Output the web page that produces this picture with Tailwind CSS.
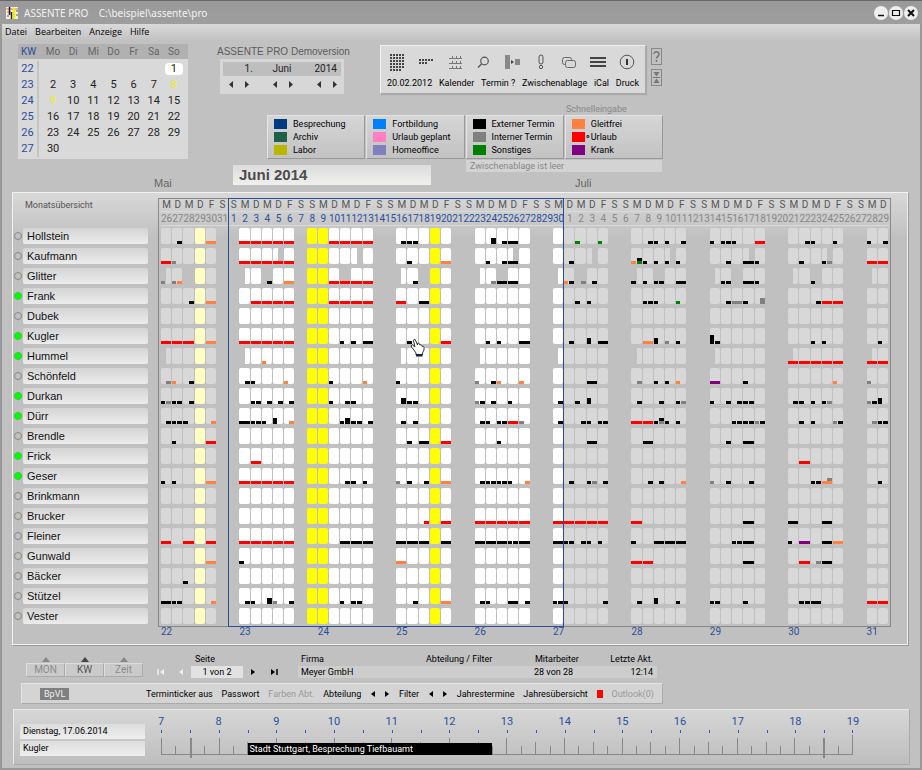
<!DOCTYPE html>
<html lang="de">
<head>
<meta charset="utf-8">
<title>ASSENTE PRO</title>
<script src="https://cdn.jsdelivr.net/npm/@tailwindcss/browser@4"></script>
</head>
<body class="min-h-screen bg-[#c1c1c1] font-[Roboto,'Liberation_Sans',Arial,sans-serif] text-[9px] leading-3 text-black">
<div class="flex min-h-screen flex-col border-x-2 border-b-2 border-[#999] bg-[#c1c1c1]">

  <!-- title bar -->
  <header class="-mx-0.5 flex h-6 items-center border-t border-[#666] bg-linear-to-b from-[#999] to-[#9e9e9e] pr-1 pl-1.5 text-[#f2f2f2]">
    <svg class="h-3 w-3" viewBox="0 0 12 12"><rect width="12" height="12" fill="#f4f0e0"/><path d="M0 2h12M1 5h4" stroke="#d66" stroke-width="1"/><path d="M3.500 0v8M5.500 5v7" stroke="#222" stroke-width="1.500"/><path d="M8 1v11" stroke="#ee0" stroke-width="2.500"/><path d="M1 9h2M10 8h2M10 4h2" stroke="#555"/></svg>
    <h1 class="ml-1.5 font-['Noto_Sans','Open_Sans',sans-serif] text-[10px] whitespace-pre">ASSENTE PRO    C:\beispiel\assente\pro</h1>
    <div class="ml-auto flex gap-px">
      <button aria-label="Minimieren" class="size-3.5 rounded-full bg-[#eee]"><svg viewBox="0 0 14 14"><path d="M4 9.500h6" stroke="#111" stroke-width="1.500"/></svg></button>
      <button aria-label="Maximieren" class="size-3.5 rounded-full bg-[#eee]"><svg viewBox="0 0 14 14"><path d="M3.500 4.500h7v5h-7z" fill="none" stroke="#111" stroke-width="1.200"/></svg></button>
      <button aria-label="Schließen" class="size-3.5 rounded-full bg-[#eee]"><svg viewBox="0 0 14 14"><path d="M4 4l6 6M10 4l-6 6" stroke="#111" stroke-width="2"/></svg></button>
    </div>
  </header>
  <nav class="flex h-4 items-center gap-2 bg-linear-to-b from-[#dadada] to-[#c2c2c2] pl-[3px] font-['Open_Sans',sans-serif] font-medium">
    <button>Datei</button><button>Bearbeiten</button><button>Anzeige</button><button>Hilfe</button>
  </nav>

  <!-- month picker, toolbar, legend -->
  <section class="flex pt-1 pl-4">
    <table class="block h-[115px] w-[170px] shrink-0 text-center text-[11px] text-[#222]">
      <thead class="block text-[10px] text-[#666]"><tr class="grid h-[15px] grid-cols-[25px_repeat(7,minmax(0,1fr))] items-center bg-[#b1b1b1] pr-1"><th class="mr-1 font-normal text-[#2a4c9c]">KW</th><th class="font-normal">Mo</th><th class="font-normal">Di</th><th class="font-normal">Mi</th><th class="font-normal">Do</th><th class="font-normal">Fr</th><th class="font-normal">Sa</th><th class="font-normal">So</th></tr></thead>
      <tbody id="mini" class="block bg-[#d9d9d9] py-0.5"></tbody>
    </table>
    <div class="flex flex-col">
      <div class="flex h-[60px] items-start">
        <div class="ml-[29px] w-[163px] shrink-0">
          <h2 class="font-['Liberation_Sans',sans-serif] text-[10px] leading-[15px] whitespace-nowrap text-[#5c5c5c]">ASSENTE PRO Demoversion</h2>
          <div class="ml-[3px] flex h-[35px] w-[124px] flex-col gap-1 bg-[#d7d7d7] p-[3px]">
            <div class="grid h-3.5 grid-cols-3 items-center bg-[#bebebe] text-center text-[10px] text-[#222]"><span class="pl-3">1.</span><span>Juni</span><span class="pr-1 text-right">2014</span></div>
            <div id="steppers" class="flex justify-between pr-0.5 pl-1"></div>
          </div>
        </div>
        <div class="mt-px flex h-[49px] w-[266px] shrink-0 flex-col justify-between border border-[#f0f0f0] border-r-[#aaa] border-b-[#aaa] bg-[#d9d9d9] pt-1.5 pb-1 shadow-[1px_1px_1px_#aaa]">
          <div id="tools" class="grid grid-cols-9 pr-1 pl-0.5"></div>
          <div id="toolLabels" class="flex justify-between px-1.5"></div>
        </div>
        <div class="mt-1 ml-[5px] flex shrink-0 flex-col gap-1">
          <button aria-label="Hilfe" class="h-[17px] w-[11px] border border-[#888]"><svg viewBox="0 0 9 15"><path d="M2 5a2.500 2.500 0 1 1 4 2.200Q4.500 8 4.500 9.500M4.500 11v2" fill="none" stroke="#777" stroke-width="1.600"/></svg></button>
          <button aria-label="Einklappen" class="h-[17px] w-[11px] border border-[#888]"><svg viewBox="0 0 9 15"><path d="M1 7.500h7" stroke="#777"/><path d="M1.500 2h6L4.500 6.500zM1.500 13h6L4.500 8.500z" fill="#777"/></svg></button>
        </div>
      </div>
      <div class="ml-[79px] w-[396px]">
        <p class="h-[11px] pl-[299px] leading-[10px] whitespace-nowrap text-[#888]">Schnelleingabe</p>
        <div id="legend" class="grid grid-cols-4 gap-px"></div>
      </div>
    </div>
  </section>
  <div class="flex h-[33px] items-start text-[#666]">
    <span class="mt-[18px] ml-[152px] w-[79px] font-['Liberation_Sans',sans-serif] text-[11px]">Mai</span>
    <h2 class="mt-1.5 h-5 w-[198px] bg-linear-to-b from-[#dcdcdc] to-[#f0f0ee] pl-1.5 font-['Liberation_Sans',sans-serif] text-[15px] leading-5 font-bold text-[#4c4c4c]">Juni 2014</h2>
    <div class="ml-[35px] w-[196px]">
      <p class="mt-px h-3 bg-[#d3d3d3] pl-1 text-[#888]">Zwischenablage ist leer</p>
      <span class="mt-[5px] block pl-[109px] font-['Liberation_Sans',sans-serif] text-[11px]">Juli</span>
    </div>
  </div>

  <!-- monthly overview -->
  <main class="mr-3 ml-2.5 border border-[#f2f2f2] bg-linear-to-b from-[#d8d8d8] via-[#c0c0c0] via-10% to-[#c0c0c0] pt-[5px] pr-[18px] pb-1.5 shadow-[1px_1px_0_#999]">
    <div class="relative">
      <table class="block">
        <thead id="head" class="block"></thead>
        <tbody id="rows" class="block"></tbody>
        <tfoot id="foot" class="block"></tfoot>
      </table>
      <div class="pointer-events-none absolute top-0 right-[-2px] bottom-[11px] left-[145px] border border-[#888]"></div>
      <div class="pointer-events-none absolute top-0 right-0 bottom-[11px] left-[148px] grid grid-cols-[repeat(65,minmax(0,1fr))]"><div class="col-span-30 col-start-7 border border-[#2a4f94]"></div></div>
      <svg class="pointer-events-none absolute top-[140px] left-[397px] h-5 w-4" viewBox="0 0 16 20"><path d="M4 12L1.500 9q-1-2 1-2L5 9 3.500 3q0-2 1.700-1.500L7.500 7V5.500q1.500-1 2 .5l.3 1q1.500-1 2 .6l.2.8q1.700-.7 2 1V12l-1.500 3v2H6v-2z" fill="#fff" stroke="#333" stroke-width="1"/><path d="M6 16h6.500v2.500H6z" fill="#124"/></svg>
    </div>
  </main>

  <!-- view switch, pager, totals -->
  <section class="mt-2 flex items-start">
    <div class="ml-6 grid w-[117px] grid-cols-3 text-center text-[10px] text-[#8a8a8a]">
      <button class="flex flex-col items-center"><svg class="mt-1 mb-px h-[5px] w-2" viewBox="0 0 8 5"><path d="M4 0L8 5H0z" fill="#888"/></svg><span class="w-full border border-[#ddd] border-r-[#aaa] border-b-[#aaa] bg-[#cacaca]">MON</span></button>
      <button class="flex flex-col items-center text-[#555]"><svg class="mt-1 mb-px h-[5px] w-2" viewBox="0 0 8 5"><path d="M4 0L8 5H0z" fill="#444"/></svg><span class="w-full border border-[#ddd] border-r-[#aaa] border-b-[#aaa] bg-[#cacaca]">KW</span></button>
      <button class="flex flex-col items-center"><svg class="mt-1 mb-px h-[5px] w-2" viewBox="0 0 8 5"><path d="M4 0L8 5H0z" fill="#888"/></svg><span class="w-full border border-[#ddd] border-r-[#aaa] border-b-[#aaa] bg-[#cacaca]">Zeit</span></button>
    </div>
    <div class="ml-3.5 flex w-[122px] items-end">
      <button aria-label="Erste Seite" class="w-4"><svg class="mb-0.5 h-2 w-2" viewBox="0 0 8 8"><path d="M1 1v6" stroke="#eee" stroke-width="1.500"/><path d="M7 1v6L3 4z" fill="#eee"/></svg></button>
      <button aria-label="Vorige Seite" class="w-[18px]"><svg class="mb-0.5 ml-1 h-2 w-2" viewBox="0 0 8 8"><path d="M6 1v6L2 4z" fill="#eee"/></svg></button>
      <div class="w-[52px]"><p class="pl-1 leading-[13px]">Seite</p><p class="bg-[#e2e2e2] text-center">1 von 2</p></div>
      <button aria-label="Nächste Seite" class="ml-1.5 w-[21px]"><svg class="mb-0.5 h-2 w-2" viewBox="0 0 8 8"><path d="M2 1v6L6 4z"/></svg></button>
      <button aria-label="Letzte Seite"><svg class="mb-0.5 h-2 w-2" viewBox="0 0 8 8"><path d="M7 1v6" stroke="#000" stroke-width="1.500"/><path d="M1 1v6L5 4z"/></svg></button>
    </div>
    <dl class="ml-[19px] grid w-[359px] grid-cols-[125px_100px_84px_50px]">
      <div><dt class="pl-[3px] leading-[13px]">Firma</dt><dd class="h-3 bg-[#cdcdcd] pl-[3px]">Meyer GmbH</dd></div>
      <div><dt class="pl-[3px] leading-[13px]">Abteilung / Filter</dt><dd class="h-3 bg-[#cdcdcd]"></dd></div>
      <div><dt class="pl-3 leading-[13px]">Mitarbeiter</dt><dd class="h-3 bg-[#cdcdcd] pl-[11px]">28 von 28</dd></div>
      <div><dt class="pr-1 text-right leading-[13px] whitespace-nowrap">Letzte Akt.</dt><dd class="h-3 bg-[#cdcdcd] pr-1 text-right">12:14</dd></div>
    </dl>
  </section>
  <section class="mt-[5px] ml-[19px] flex h-[21px] w-[642px] items-center justify-between border border-[#e4e4e4] border-r-[#aaa] border-b-[#aaa] bg-[#d4d4d4] pr-2 pl-[18px]">
    <button class="mr-[68px] bg-[#808080] px-1 text-[#eee]">BpVL</button>
    <button>Terminticker aus</button><button>Passwort</button><button disabled class="text-[#999]">Farben Abt.</button>
    <button>Abteilung</button>
    <span class="flex gap-2"><button aria-label="Abteilung zurück"><svg class="size-1.5" viewBox="0 0 6 6"><path d="M5 0v6L1 3z"/></svg></button><button aria-label="Abteilung vor"><svg class="size-1.5" viewBox="0 0 6 6"><path d="M1 0v6l4-3z"/></svg></button></span>
    <button>Filter</button>
    <span class="flex gap-2"><button aria-label="Filter zurück"><svg class="size-1.5" viewBox="0 0 6 6"><path d="M5 0v6L1 3z"/></svg></button><button aria-label="Filter vor"><svg class="size-1.5" viewBox="0 0 6 6"><path d="M1 0v6l4-3z"/></svg></button></span>
    <button>Jahrestermine</button><button>Jahresübersicht</button>
    <i class="h-2 w-1.5 bg-[#f00]"></i>
    <button disabled class="text-[#999]">Outlook(0)</button>
  </section>

  <!-- day timeline -->
  <section class="mt-[5px] mr-2.5 ml-[11px] flex h-14 border border-[#e8e8e8] border-r-[#aaa] border-b-[#aaa] bg-linear-to-b from-[#d6d6d6] to-[#bebebe]">
    <div class="mt-3.5 ml-1.5 flex w-[125px] flex-col gap-0.5">
      <p class="h-[15px] bg-linear-to-b from-[#ddd] to-[#eee] pl-[3px] leading-[15px]">Dienstag, 17.06.2014</p>
      <p class="h-[15px] bg-linear-to-b from-[#ddd] to-[#eee] pl-[3px] leading-[15px]">Kugler</p>
    </div>
    <div class="relative mt-1.5 mr-14 ml-4 flex-1">
      <div id="hours" class="grid grid-cols-12 text-[11px] text-[#2a4f9c]"></div>
      <div id="halves" class="mt-0.5 grid h-[3px] grid-cols-24"></div>
      <div id="ticks" class="mt-0.5 grid h-5 grid-cols-48 items-end border-r border-b border-[#888]"></div>
      <div class="absolute top-[27px] right-[52.1%] left-[12.5%] h-3 bg-black pl-0.5 leading-3 whitespace-nowrap text-white">Stadt Stuttgart, Besprechung Tiefbauamt</div>
    </div>
  </section>
</div>

<script>
const byId = id => document.getElementById(id);

// small month calendar
const weekCell = (kw, days) => `<tr class="grid h-4 grid-cols-[25px_repeat(7,minmax(0,1fr))] items-center pr-1"><th class="mr-1 h-full border-r-2 border-[#c4c4c4] leading-4 font-normal text-[#2a4c9c]">${kw}</th>${days}</tr>`;
byId('mini').innerHTML = [22, 23, 24, 25, 26, 27].map((kw, w) => weekCell(kw, [...Array(7)].map((_, i) => {
  const d = w * 7 + i - 5;
  if (d < 1 || d > 30) return '<td></td>';
  const c = d === 1 ? 'mx-px rounded-sm bg-white' : d === 8 || d === 9 ? 'text-[#eeee20]' : '';
  return `<td class="${c}">${d}</td>`;
}).join(''))).join('');

byId('steppers').innerHTML = ['Tag', 'Monat', 'Jahr'].map(n => `<span class="flex justify-center gap-2"><button aria-label="${n} zurück"><svg class="size-2" viewBox="0 0 8 8"><path d="M6 1v7L2 4.500z" fill="#333"/></svg></button><button aria-label="${n} vor"><svg class="size-2" viewBox="0 0 8 8"><path d="M2 1v7l4-3.500z" fill="#333"/></svg></button></span>`).join('');

// toolbar
const dot = (x, y) => `<rect x="${x}" y="${y}" width="2" height="2"/>`;
const dots = (rows, x0, y0) => rows.map((n, r) => [...Array(n)].map((_, i) => dot(x0 + i * 3, y0 + r * 3)).join('')).join('');
const ico = {
  'Jahr': `<g fill="#444">${dots([5, 5, 5, 5, 5, 4], 3, 2)}</g>`,
  'Woche': `<g fill="#444">${dots([5, 3], 3, 7)}</g>`,
  'Kalender': '<path d="M4 6.500h13M4 11.500h13M4 16.500h13M7.500 4v2.500M11.500 4v2.500M15.500 4v2.500M7.500 9v2.500M11.500 9v2.500M15.500 9v2.500M7.500 14v2.500M11.500 14v2.500M15.500 14v2.500" stroke="#777" fill="none"/>',
  'Suchen': '<circle cx="11.500" cy="9" r="3.800" fill="none" stroke="#555" stroke-width="1.200"/><path d="M8.500 12L5 15.500" stroke="#555" stroke-width="1.500"/>',
  'Verschieben': '<path d="M3 3h5v14H3zM13 7h5v6h-5z" fill="#888"/><path d="M9 8v4l3-2z" fill="#444"/>',
  'Wichtig': '<rect x="8" y="3" width="4" height="9" rx="2" fill="none" stroke="#555"/><circle cx="10" cy="15" r="1.700" fill="none" stroke="#555"/>',
  'Kopieren': '<rect x="3.500" y="5.500" width="9" height="7" rx="2" fill="none" stroke="#666"/><rect x="6.500" y="8.500" width="10" height="7" rx="2" fill="#d8d8d8" stroke="#666"/>',
  'iCal': '<path d="M2 6h16M2 10h16M2 14h16" stroke="#444" stroke-width="1.800"/>',
  'Druck': '<circle cx="10" cy="10" r="6.800" fill="none" stroke="#555"/><path d="M10 7v6" stroke="#333" stroke-width="2"/>'
};
byId('tools').innerHTML = Object.entries(ico).map(([n, p]) => `<button aria-label="${n}" class="flex justify-center"><svg class="size-5" viewBox="0 0 20 20">${p}</svg></button>`).join('');
byId('toolLabels').innerHTML = ['20.02.2012', 'Kalender', 'Termin ?', 'Zwischenablage', 'iCal', 'Druck'].map(t => `<button class="whitespace-nowrap">${t}</button>`).join('');

// legend
byId('legend').innerHTML = [
  [['Besprechung', '#003c80'], ['Archiv', '#206048'], ['Labor', '#b8b800']],
  [['Fortbildung', '#0080ff'], ['Urlaub geplant', '#ff80c0'], ['Homeoffice', '#8080c0']],
  [['Externer Termin', '#000'], ['Interner Termin', '#808080'], ['Sonstiges', '#008000']],
  [['Gleitfrei', '#ff8040'], ['Urlaub', '#f00'], ['Krank', '#800080']]
].map(g => `<div class="flex h-11 flex-col justify-center gap-px border border-[#e4e4e4] border-r-[#999] border-b-[#999] bg-linear-to-b from-[#d6d6d6] to-[#c2c2c2] pl-1.5">${g.map(([t, c]) =>
  `<button class="flex h-3 items-center whitespace-nowrap"><i class="h-2.5 w-[13px]" style="background:${c}"></i><span class="w-1.5 text-center">${t === 'Urlaub' ? '∘' : ''}</span>${t}</button>`).join('')}</div>`).join('');

// Bookings: month letter (M = Mai, J = Juni, L = Juli), day or day range, optional half (a/b),
// colour letters from bottom to top. "-" marks time off.
const people = [
  ['Hollstein', 0, 'M27bk M30o J2-6r J10-13r J16bk J17ak J17bk J24bkk J25bk J26k L2an L4an L8bk L9ak L10ak L11bk L14ak L15ak L15bk L16ak L18r L22bk L23ak L25ak L28ak L29bk'],
  ['Kaufmann', 0, 'M26r M27ag J2-6r J5b- J12b- J17ak J20o J24ak J25bk J26k J26b- L1bk L3b- L7ao L7bnk L8ak L9ak L10ak L10b- L11ak L15bk L17k L17b- L18ak L22ak L24ak L24bg L24b- L28-29r'],
  ['Glitter', 0, 'M26a- M26ag M27ag M27bo M28- J2a- J4- J4bk J6o J10-13r J11- J16a- J17bk J18- J23a- J24bg J25- J25k J26k J30a- L1ao L1bk L2- L2bg L3bk L7a- L7ak L8ak L9- L9ak L9bk L11k L14a- L15ak L15bk L16- L17k L18ak L21a- L23- L23ak L28a-'],
  ['Frank', 1, 'M28bk M30o J3-6r J10-13r J16r J18k L2ak L3ak L8ak L8bk L9ak L11an L15bk L16g L17ak L18bgg L23bk L24-25r'],
  ['Dubek', 0, ''],
  ['Kugler', 1, 'M26-28r M30o J2-6r J11ak J12ak J13k J17ak J20r J24ak J25ak J27k L1bk L3akk L4k L8o L9akk L10ag L11ak L14akkk L14bk L23ak L24ak L29ak'],
  ['Hummel', 1, 'M26a- J2a- J4ao J16a- J23a- J30a- L7a- L14a- L21a- L28a- L21-25r L28-29r'],
  ['Schönfeld', 0, 'M26bg M27ao M28bk J2bk J3ak J6ao J10ak J13ao J16ak J23ag J24bk J25ao J27ao L3k L7bg L9ak L10ak L11ao L14p L17ak L25ao L28ag'],
  ['Durkan', 1, 'M26ak M26bg M27ak M27bk M28bk J3ak J3bk J4bk J5bk J6bk J10ak J11bk J12ak J16bkk J17ak J17bk J23ag J23bk J24bk J26ak J30bk L2ak L3akk L7bk L9bk L11ak L11bg L14ak L15bk L16bk L17ak L17bk L21bk L22ak L23ak L24ak L24bg L28ag L28bk L29akk'],
  ['Dürr', 1, 'M26bk M27ak M27bk M28ak M30bo J2k J3ak J3bk J4ak J5akk J6bo J11ak J11bkk J12ak J12bk J13bk J16bk J17bk J23bk J24ak J25ak J25bk J26r J27ag J30bk L2bk L3ak L4ak L4bk L7-8r L9ak L9bgk L10ak L11ak L16ak L16bk L17ak L17bk L18ag L18bk L22ak L23ak L25ag L25bk L28bg L29ak L29bk'],
  ['Brendle', 0, 'M27ak M30r J17ak J18k J20r J25ak L3k L8k L15bk L17k'],
  ['Frick', 1, 'J3r L22r'],
  ['Geser', 1, 'M26ak M27ak M30o J2-6r J11bk J12ak J13ak J16ag J17ak J18bk J20o J23bk J24ak J24bk J25ak J25bk J26ak J27bo L1bk L3ak L3bg L4bk L8bk L9bk L11bo L14ag L15bk L17bk L23ak L23bk L24o L24bg L29ak'],
  ['Brinkmann', 0, ''],
  ['Brucker', 0, 'J18br J20r J23-27r J30r L1-4r L7r L17k L21k L24k'],
  ['Fleiner', 0, 'M26r M28r M30r J2-6r J11-13k J16-18k J20k J23-25k J26ak J26bk J27k J30k L1ak L1bk L2bk L3ak L4ak L7ak L9-11k L16ak L16bk L17k L21ak L22p L24k L25o'],
  ['Gunwald', 0, 'M30o J2ak J16o L7-8r L17k L22r L23bg L24k'],
  ['Bäcker', 0, 'M28ak'],
  ['Stützel', 0, 'M26k M27ak M27bk M30bo J2bk J3ak J4bkk J5ag J6bk J11ak J12ak J12bk J17bk J20o J23bk J24ak J26k J27bk J30ak J30bk L1ak L4bk L7bk L9akk L11ak L14ak L14bk L17ak L22ak L22bk L23k L28-29r'],
  ['Vester', 0, '']
];
const offset = { M: -26, J: 5, L: 35 };
const paint = { k: 'bg-black', g: 'bg-[#808080]', r: 'bg-[#f00]', o: 'bg-[#ff8040]', n: 'bg-[#008000]', p: 'bg-[#800080]' };
const holiday = { 3: 'bg-[#ffffc4]', 13: 'bg-[#ff0]', 14: 'bg-[#ff0]', 24: 'bg-[#ff0]' };
const rowGrid = 'grid grid-cols-[148px_repeat(65,minmax(0,1fr))]';
const inJune = c => c > 5 && c < 36;

function schedule(text) {
  const halves = [...Array(130)].map(() => ({ off: false, marks: [] }));
  for (const t of text.split(' ').filter(Boolean)) {
    const [, m, d1, d2, half, codes] = t.match(/^([MJL])(\d+)(?:-(\d+))?([ab]?)(.+)$/);
    for (let d = +d1; d <= +(d2 || d1); d++) {
      const c = d + offset[m];
      for (const h of half ? [half === 'a' ? 0 : 1] : [0, 1]) {
        const slot = halves[c * 2 + h];
        if (codes === '-') slot.off = true;
        else for (const k of codes) slot.marks.unshift([k, !!half && h === 0]);
      }
    }
  }
  return halves;
}

const letters = 'MDMDFSS';
const dayNo = c => c < 6 ? 26 + c : c < 36 ? c - 5 : c - 35;
const letterRow = [...Array(65)].map((_, c) => `<th class="border-b border-[#dadada] text-center text-[10px] leading-[13px] font-normal text-[#555]">${letters[c % 7]}</th>`).join('');
const numberRow = [...Array(65)].map((_, c) => `<th class="flex justify-center border-b border-[#dadada] text-[10px] leading-[13px] font-normal ${inJune(c) ? 'text-[#2a4f9c]' : 'text-[#888]'}">${dayNo(c)}</th>`).join('');
byId('head').innerHTML = `<tr class="${rowGrid} h-3.5 items-center"><th class="pl-3 text-left font-normal text-[#555]">Monatsübersicht</th>${letterRow}</tr><tr class="${rowGrid} h-3.5 items-center"><td></td>${numberRow}</tr>`;

byId('rows').innerHTML = people.map(([name, on, text]) => {
  const hs = schedule(text);
  let cells = '';
  for (let c = 0; c < 65; c++) {
    const open = c % 7 < 5;
    const base = holiday[c] || (inJune(c) ? 'bg-white' : 'bg-[#d8d8d8]');
    if (!open && !holiday[c]) { cells += '<td></td>'; continue; }
    cells += '<td class="flex h-4 pr-px">' + [0, 1].map(h => {
      const s = hs[c * 2 + h];
      const bg = s.off ? '' : base;
      return `<div class="flex flex-1 flex-col justify-end ${h ? 'rounded-r-xs' : 'rounded-l-xs'} ${bg}">${s.marks.map(([k, gap]) => `<i class="h-[3px] ${gap ? 'mr-px' : ''} ${paint[k]}"></i>`).join('')}</div>`;
    }).join('') + '</td>';
  }
  return `<tr class="${rowGrid} h-5 items-center"><th class="flex items-center gap-px pr-[13px] pl-px text-[11px] font-normal"><i class="size-2 shrink-0 rounded-full border ${on ? 'border-[#3c3] bg-[#0f0]' : 'border-[#888]'}"></i><button class="h-4 flex-1 rounded-xs bg-linear-to-b from-[#d4d4d4] to-[#ececec] pl-1 text-left font-['Liberation_Sans',sans-serif] text-[11px] text-[#111]">${name}</button></th>${cells}</tr>`;
}).join('');
byId('foot').innerHTML = `<tr class="${rowGrid} h-3 items-end text-[10px]"><td></td>${[...Array(10)].map((_, i) => `<td class="${i < 9 ? 'col-span-7' : 'col-span-2'} text-[#2a4f9c]">${22 + i}</td>`).join('')}</tr>`;

// timeline ruler
byId('hours').innerHTML = [...Array(12)].map((_, i) => `<span class="flex justify-between"><span class="-translate-x-1/2">${7 + i}</span>${i === 11 ? '<span class="translate-x-1/2">19</span>' : ''}</span>`).join('');
byId('halves').innerHTML = [...Array(24)].map((_, i) => `<i class="border-l border-[#2a5fc0] ${i === 23 ? 'border-r' : ''}"></i>`).join('');
byId('ticks').innerHTML = [...Array(48)].map((_, i) => `<i class="border-l border-[#888] ${i === 2 || i === 46 ? '-mb-1 h-5 border-l-2' : i % 4 === 0 ? 'h-4' : i % 2 === 0 ? 'h-3' : 'h-2'}"></i>`).join('');
</script>
</body>
</html>
